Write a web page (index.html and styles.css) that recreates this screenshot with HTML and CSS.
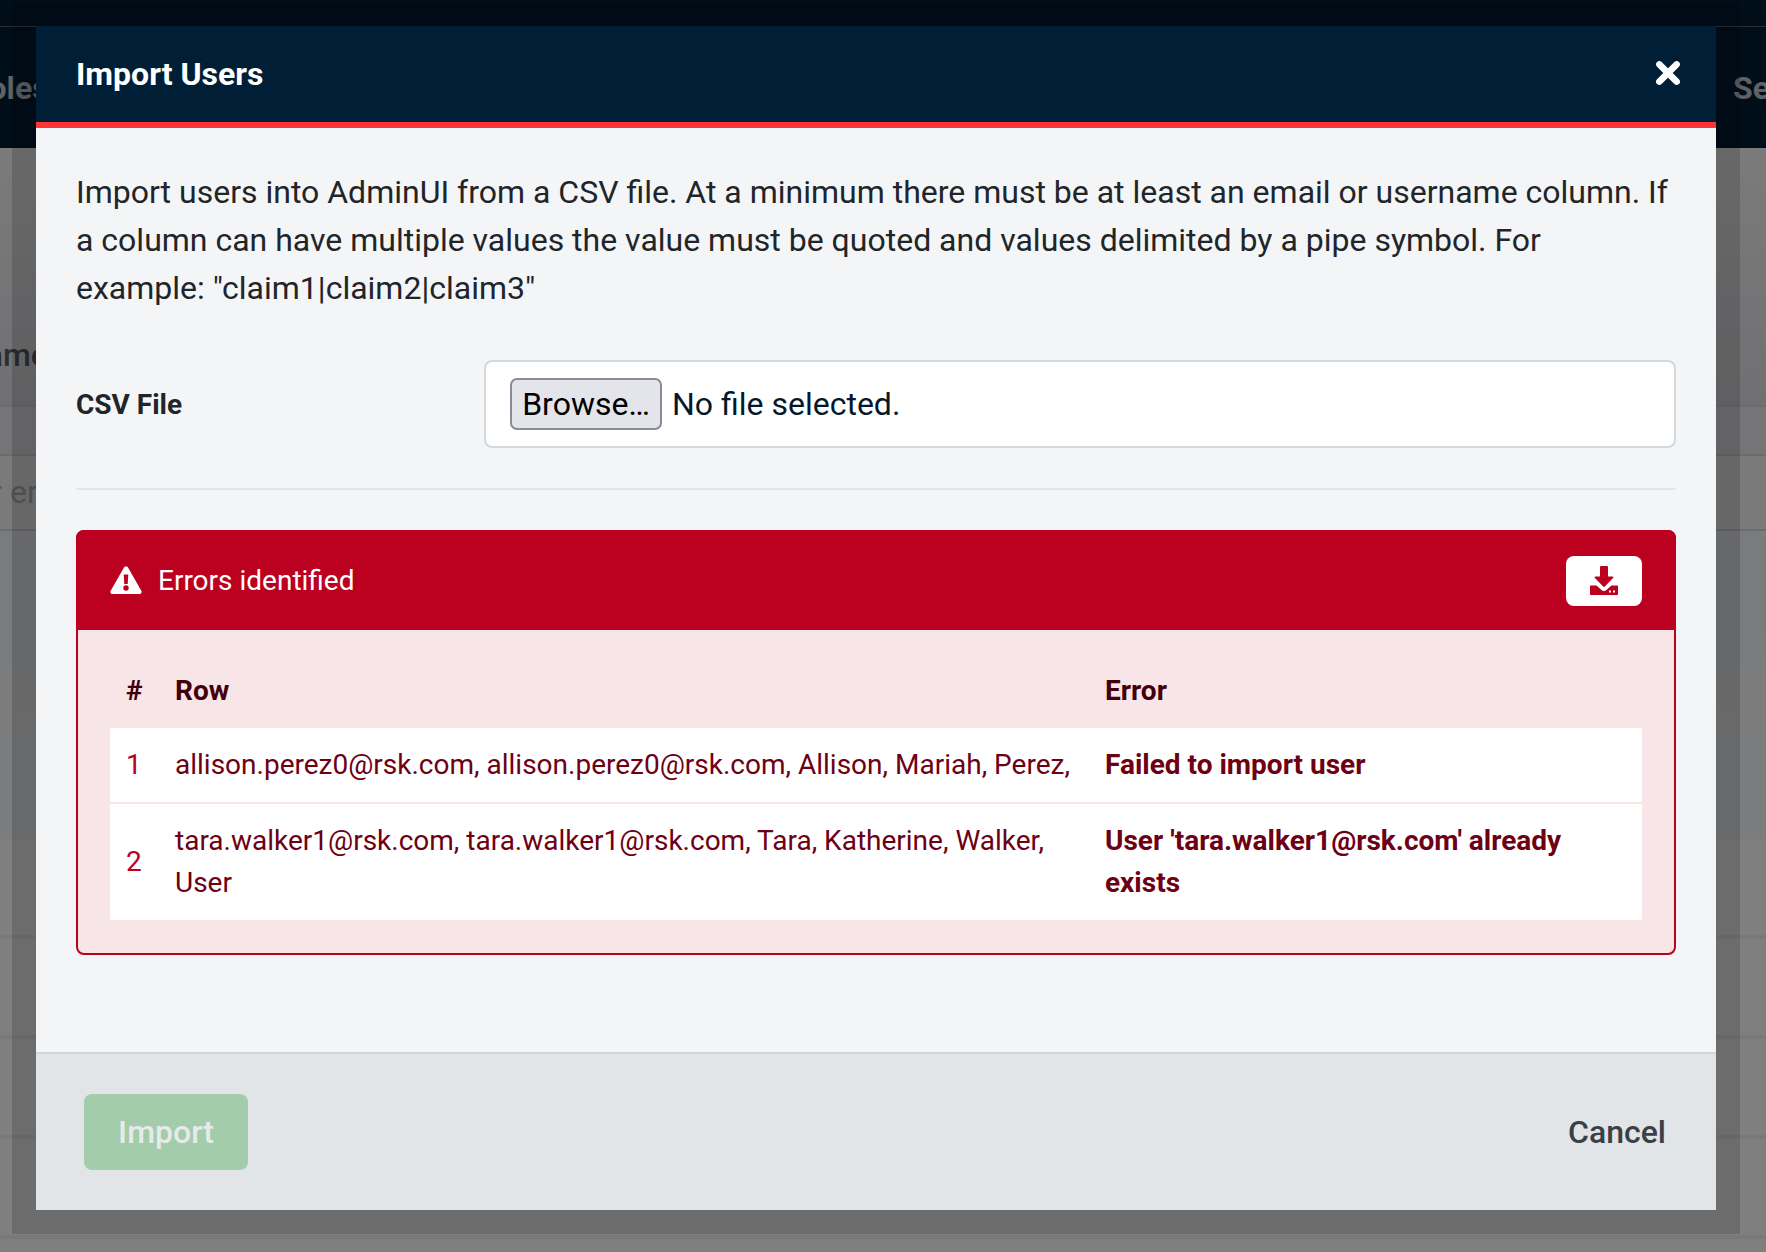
FILE: index.html
```html
<!DOCTYPE html>
<html lang="en">
<head>
<meta charset="utf-8">
<title>Import Users</title>
<link rel="stylesheet" href="styles.css">
</head>
<body>
<div class="page">
  <div class="topbar"></div>
  <nav class="nav"><span class="nav-left">Roles</span><span class="nav-right">Settings</span></nav>
  <section class="sec sec-title"><span class="bg-title">Name</span></section>
  <section class="sec sec-tools"></section>
  <section class="sec sec-search"><span class="bg-search">or er</span></section>
  <section class="sec sec-list"></section>
  <section class="sec sec-row"></section>
  <section class="sec sec-row"></section>
  <section class="sec sec-row"></section>
  <section class="sec sec-row"></section>
</div>
<div class="backdrop"></div>
<div class="modal">
  <header class="modal-head">
    <h1 class="modal-title">Import Users</h1>
    <svg class="close" viewBox="0 0 24 24" aria-label="Close"><path d="M4 4 20 20M20 4 4 20"/></svg>
  </header>
  <main class="modal-body">
    <p class="intro">Import users into AdminUI from a CSV file. At a minimum there must be at least an email or username column. If a column can have multiple values the value must be quoted and values delimited by a pipe symbol. For example: "claim1|claim2|claim3"</p>
    <div class="field">
      <label class="field-label">CSV File</label>
      <div class="file-box"><span class="browse">Browse…</span><span class="file-name">No file selected.</span></div>
    </div>
    <hr class="rule">
    <section class="alert">
      <div class="alert-head">
        <svg class="warn" viewBox="0 0 32 28"><path fill-rule="evenodd" d="M16 0.500c1 0 1.800.5 2.300 1.400l13 22.800c1 1.700-.2 3.300-2.200 3.300H2.900c-2 0-3.200-1.600-2.200-3.300l13-22.800C14.200 1 15 .5 16 .5ZM13.700 8.500l.6 9.500h3.400l.6-9.500ZM16 19.300a2.700 2.700 0 1 0 0 5.400 2.700 2.700 0 0 0 0-5.400Z"/></svg>
        <span class="alert-title">Errors identified</span>
        <span class="dl-btn">
          <svg class="dl" viewBox="0 0 28 29"><path d="M10 1a1 1 0 0 1 1-1h6a1 1 0 0 1 1 1v9.500h4.500c.8 0 1.200.9.600 1.500l-8.300 8.500c-.5.400-1.100.4-1.600 0L4.900 12c-.6-.6-.2-1.500.6-1.500H10Z"/><path fill-rule="evenodd" d="M.8 19.500h5.700l5 4.500c1.400 1.200 3.500 1.200 4.900 0l5-4.500h5.800c.5 0 .8.3.8.8V28c0 .6-.3 1-.8 1H.8c-.5 0-.8-.4-.8-1v-7.700c0-.5.300-.8.800-.8ZM19 24.500v2h2v-2ZM23 24.500v2h2v-2Z"/></svg>
        </span>
      </div>
      <div class="alert-body">
        <table class="errors">
          <colgroup><col class="c-num"><col class="c-row"><col class="c-err"></colgroup>
          <thead>
            <tr><th>#</th><th>Row</th><th>Error</th></tr>
          </thead>
          <tbody>
            <tr><td class="num">1</td><td>allison.perez0@rsk.com, allison.perez0@rsk.com, Allison, Mariah, Perez,</td><td class="err">Failed to import user</td></tr>
            <tr><td class="num">2</td><td>tara.walker1@rsk.com, tara.walker1@rsk.com, Tara, Katherine, Walker, User</td><td class="err">User 'tara.walker1@rsk.com' already exists</td></tr>
          </tbody>
        </table>
      </div>
    </section>
  </main>
  <footer class="modal-foot">
    <span class="btn-import">Import</span>
    <span class="btn-cancel">Cancel</span>
  </footer>
</div>
</body>
</html>
```
FILE: styles.css
```css
* { box-sizing: border-box; }
html, body { margin: 0; height: 100%; overflow: hidden; }
body { font-family: Roboto, "Liberation Sans", sans-serif; position: relative; width: 1766px; height: 1252px; }

/* Page dimmed behind the dialog */
.page { position: absolute; inset: 0; background: #fff; overflow: hidden; }
.topbar { height: 27px; background: #001c33; border-bottom: 1px solid #5a5c60; }
.nav { height: 121px; background: #001c33; color: #c0c4c8; font-size: 32px; font-weight: 700; position: relative; }
.nav-left { position: absolute; left: -32px; top: 42px; }
.nav-right { position: absolute; left: 1733px; top: 42px; }

.sec { position: relative; border-bottom: 2px solid #d6d9dd; }
.sec-title { height: 259px; background: linear-gradient(#f6f6f6, #e0e1e6); }
.sec-tools { height: 49px; background: #eaebee; }
.sec-search { height: 75px; background: #f4f4f4; }
.sec-list { height: 308px; background: linear-gradient(#f4f6f8, #f8f9fb); border-bottom: 0; }
.sec-row { height: 100px; background: #fff; border-bottom: 4px solid #f2f2f2; }
.sec-row:first-of-type { height: 96px; }
.bg-title { position: absolute; left: -37px; top: 188px; font-size: 32px; line-height: 38px; font-weight: 500; color: #5a5d66; }
.bg-search { position: absolute; left: -27px; top: 17px; font-size: 32px; line-height: 38px; color: #b4b8c0; }

.backdrop { position: absolute; inset: 0; background: rgba(0, 0, 0, .5); }

.modal { position: absolute; left: 36px; top: 26px; width: 1680px; height: 1184px; display: flex; flex-direction: column; box-shadow: 0 0 0 24px rgba(0, 0, 0, .15); }

.modal-head { height: 102px; background: #001e36; border-bottom: 6px solid #ff3333; display: flex; align-items: center; justify-content: space-between; padding: 0 35px 0 40px; }
.modal-title { margin: 0; color: #fff; font-size: 32px; font-weight: 700; line-height: 48px; }
.close { width: 26px; height: 26px; margin-bottom: 2px; fill: none; stroke: #fff; stroke-width: 6; stroke-linecap: round; }

.modal-body { flex: 1; background: #f4f5f7; padding: 40px 40px 0; }
.intro { margin: 0 0 48px; font-size: 32px; line-height: 48px; color: #212529; }

.field { display: flex; align-items: center; height: 88px; }
.field-label { width: 408px; font-size: 28px; font-weight: 700; color: #212529; }
.file-box { flex: 1; height: 88px; background: #fff; border: 2px solid #d3d8de; border-radius: 8px; display: flex; align-items: center; padding-left: 24px; font-size: 32px; color: #04182b; }
.browse { width: 152px; height: 52px; background: #e4e5ea; border: 2px solid #8a8a98; border-radius: 7px; color: #000; display: flex; align-items: center; justify-content: center; margin-right: 10px; }

.rule { border: 0; border-top: 2px solid #e3e6e9; margin: 40px 0; }

.alert { border: 2px solid #bb0020; border-radius: 8px; background: #f8e5e7; }
.alert-head { height: 100px; margin: -2px -2px 0; background: #bb0020; border-radius: 8px 8px 0 0; display: flex; align-items: center; padding: 0 34px; color: #fff; }
.warn { width: 32px; height: 28px; fill: #fff; }
.alert-title { flex: 1; margin-left: 16px; font-size: 28px; }
.dl-btn { width: 76px; height: 50px; margin-top: 2px; background: #fff; border-radius: 8px; display: flex; align-items: center; justify-content: center; }
.dl { width: 28px; height: 29px; margin-bottom: 2px; fill: #bb0020; }

.alert-body { padding: 24px 32px 33px; }
.errors { width: 100%; border-collapse: separate; border-spacing: 0; table-layout: fixed; font-size: 28px; line-height: 42px; color: #6e0013; }
.c-num { width: 49px; }
.c-row { width: 930px; }
.errors th { text-align: left; font-weight: 700; padding: 16px; color: #42000c; }
.errors td { background: #fff; padding: 16px; vertical-align: middle; border-top: 2px solid #f8e5e7; }
.errors tbody tr:first-child td { border-top: 0; }
.errors .num { color: #bb0020; }
.errors .err { font-weight: 700; }

.modal-foot { height: 158px; background: #e1e5e8; border-top: 2px solid #d0d6dc; display: flex; align-items: center; justify-content: space-between; padding: 0 50px 0 48px; font-size: 32px; font-weight: 500; }
.btn-import { width: 164px; height: 76px; background: #a3ccaa; color: #e6eaea; border-radius: 8px; display: flex; align-items: center; justify-content: center; }
.btn-cancel { color: #3b4046; }
```
